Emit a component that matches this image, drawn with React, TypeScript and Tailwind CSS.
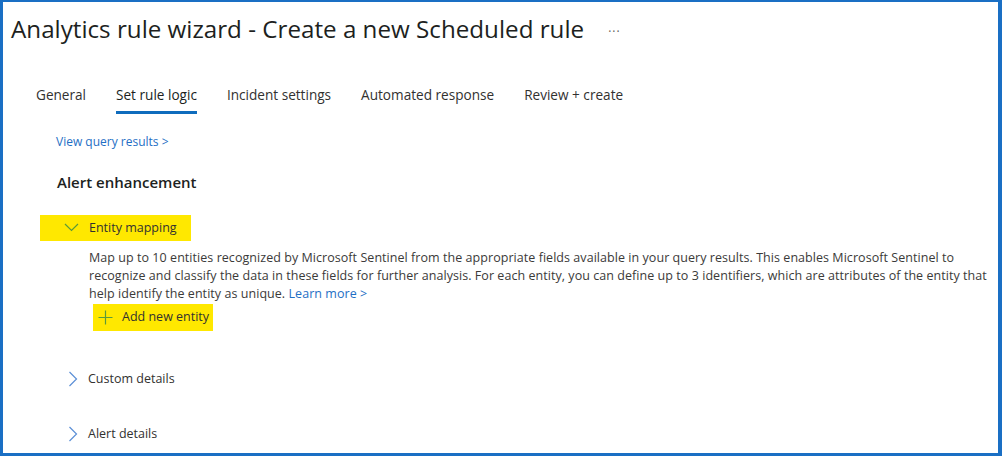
import React from "react";

const tabs = ["General", "Set rule logic", "Incident settings", "Automated response", "Review + create"];

function ChevronRight() {
  return (
    <svg width="10" height="16" viewBox="0 0 10 16" fill="none">
      <path d="M1.5 1 L8.5 8 L1.5 15" stroke="#5b8fd6" strokeWidth="1.2" />
    </svg>
  );
}

export default function App() {
  return (
    <div className="h-[456px] w-[1002px] overflow-hidden bg-white font-['Open_Sans',sans-serif] text-[#323130]">
      <div className="h-full w-full border-l-[3px] border-t-2 border-r-[4px] border-b-[3px] border-[#1a6fc4] bg-white">
        <div className="flex items-center pl-[8px] pt-[10px]">
          <h1 className="text-[24.2px] leading-[34px] text-[#201f1e]">
            Analytics rule wizard - Create a new Scheduled rule
          </h1>
          <span className="ml-[24px] mt-[6px] text-[12px] tracking-[1px] text-[#605e5c]">···</span>
        </div>

        <div className="mt-[39px] flex pl-[33px] text-[13.6px]">
          {tabs.map((t, i) => (
            <div
              key={t}
              className={
                "mr-[30px] pb-[6px] " +
                (i === 1 ? "border-b-[3px] border-[#0f6cbd] text-[#201f1e]" : "border-b-[3px] border-transparent text-[#323130]")
              }
            >
              {t}
            </div>
          ))}
        </div>

        <div className="mt-[19px] pl-[53px] text-[12px] text-[#1f6fc5]">View query results &gt;</div>

        <div className="mt-[20px] pl-[54px] text-[15px] font-semibold text-[#201f1e]">Alert enhancement</div>

        <div className="mt-[21px] ml-[37px] flex h-[26px] w-[151px] items-center bg-[#ffe800]">
          <svg className="ml-[24px]" width="15" height="9" viewBox="0 0 15 9" fill="none">
            <path d="M1 1 L7.5 7.5 L14 1" stroke="#5a9a3a" strokeWidth="1.2" />
          </svg>
          <span className="ml-[10px] text-[12.5px] text-[#323130]">Entity mapping</span>
        </div>

        <div className="mt-[8px] pl-[86px] text-[12.5px] leading-[18px] tracking-[0.05px] text-[#3b3a39]">
          <div className="whitespace-nowrap">
            Map up to 10 entities recognized by Microsoft Sentinel from the appropriate fields available in your query results. This enables Microsoft Sentinel to
          </div>
          <div className="whitespace-nowrap">
            recognize and classify the data in these fields for further analysis. For each entity, you can define up to 3 identifiers, which are attributes of the entity that
          </div>
          <div className="whitespace-nowrap">
            help identify the entity as unique. <span className="text-[#1f6fc5]">Learn more &gt;</span>
          </div>
        </div>

        <div className="mt-[1px] ml-[90px] flex h-[27px] w-[120px] items-center bg-[#ffe800]">
          <svg className="ml-[5px]" width="15" height="15" viewBox="0 0 15 15" fill="none">
            <path d="M7.5 0.5 V14.5 M0.5 7.5 H14.5" stroke="#5a9a3a" strokeWidth="1.2" />
          </svg>
          <span className="ml-[9px] text-[12.5px] text-[#323130]">Add new entity</span>
        </div>

        <div className="mt-[39px] ml-[65px] flex items-center">
          <ChevronRight />
          <span className="ml-[10px] text-[12.5px] text-[#323130]">Custom details</span>
        </div>

        <div className="mt-[36px] ml-[65px] flex items-center">
          <ChevronRight />
          <span className="ml-[10px] text-[12.5px] text-[#323130]">Alert details</span>
        </div>
      </div>
    </div>
  );
}
